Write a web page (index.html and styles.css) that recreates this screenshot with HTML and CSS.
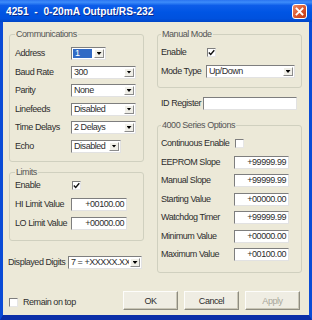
FILE: index.html
```html
<!DOCTYPE html>
<html lang="en">
<head>
    <meta charset="UTF-8">
    <meta name="viewport" content="width=device-width, initial-scale=1.0">
    <title>4251 - 0-20mA Output/RS-232</title>
    <link rel="stylesheet" href="styles.css">
</head>
<body>
    <div class="window">
        <div class="titlebar">
            <span class="title">4251&nbsp; -&nbsp; 0-20mA Output/RS-232</span>
            <span class="close">
                <svg width="13" height="13" viewBox="0 0 13 13"><path d="M3.5 3.5 L9.5 9.5 M9.5 3.5 L3.5 9.5" stroke="#fff" stroke-width="1.8" stroke-linecap="square"/></svg>
            </span>
        </div>

        <div class="body">
            <div class="columns">
                <!-- left column -->
                <div class="col">
                    <fieldset class="group comm">
                        <legend>Communications</legend>
                        <div class="rows">
                            <div class="row"><span class="label">Address</span><div class="combo w-addr"><span class="val sel">1</span><span class="drop"></span></div></div>
                            <div class="row"><span class="label">Baud Rate</span><div class="combo w-comm"><span class="val">300</span><span class="drop"></span></div></div>
                            <div class="row"><span class="label">Parity</span><div class="combo w-comm"><span class="val">None</span><span class="drop"></span></div></div>
                            <div class="row"><span class="label">Linefeeds</span><div class="combo w-comm"><span class="val">Disabled</span><span class="drop"></span></div></div>
                            <div class="row"><span class="label">Time Delays</span><div class="combo w-comm"><span class="val">2 Delays</span><span class="drop"></span></div></div>
                            <div class="row"><span class="label">Echo</span><div class="combo w-echo"><span class="val">Disabled</span><span class="drop"></span></div></div>
                        </div>
                    </fieldset>

                    <fieldset class="group limits">
                        <legend>Limits</legend>
                        <div class="rows">
                            <div class="row"><span class="label">Enable</span><span class="check on"><svg width="7" height="7" viewBox="0 0 7 7"><path d="M0.8 3.4 L2.7 5.4 L6.3 1.2" fill="none" stroke="#111" stroke-width="1.4"/></svg></span></div>
                            <div class="row"><span class="label">HI Limit Value</span><span class="field w-limit">+00100.00</span></div>
                            <div class="row"><span class="label">LO Limit Value</span><span class="field w-limit">+00000.00</span></div>
                        </div>
                    </fieldset>

                    <div class="row digits"><span class="label">Displayed Digits</span><div class="combo w-digits"><span class="val">7 = +XXXXX.XX</span><span class="drop"></span></div></div>
                </div>

                <!-- right column -->
                <div class="col">
                    <fieldset class="group manual">
                        <legend>Manual Mode</legend>
                        <div class="rows">
                            <div class="row"><span class="label">Enable</span><span class="check on"><svg width="7" height="7" viewBox="0 0 7 7"><path d="M0.8 3.4 L2.7 5.4 L6.3 1.2" fill="none" stroke="#111" stroke-width="1.4"/></svg></span></div>
                            <div class="row"><span class="label">Mode Type</span><div class="combo w-mode"><span class="val">Up/Down</span><span class="drop"></span></div></div>
                        </div>
                    </fieldset>

                    <div class="row idreg"><span class="label">ID Register</span><span class="field w-id"></span></div>

                    <fieldset class="group series">
                        <legend>4000 Series Options</legend>
                        <div class="rows">
                            <div class="row"><span class="label">Continuous Enable</span><span class="check"></span></div>
                            <div class="row"><span class="label">EEPROM Slope</span><span class="field w-opt">+99999.99</span></div>
                            <div class="row"><span class="label">Manual Slope</span><span class="field w-opt">+99999.99</span></div>
                            <div class="row"><span class="label">Starting Value</span><span class="field w-opt">+00000.00</span></div>
                            <div class="row"><span class="label">Watchdog Timer</span><span class="field w-opt">+99999.99</span></div>
                            <div class="row"><span class="label">Minimum Value</span><span class="field w-opt">+00000.00</span></div>
                            <div class="row"><span class="label">Maximum Value</span><span class="field w-opt">+00100.00</span></div>
                        </div>
                    </fieldset>
                </div>
            </div>

            <div class="footer">
                <div class="row ontop"><span class="check"></span><span class="label">Remain on top</span></div>
                <div class="buttons">
                    <button class="btn">OK</button>
                    <button class="btn">Cancel</button>
                    <button class="btn" disabled>Apply</button>
                </div>
            </div>
        </div>
    </div>
</body>
</html>
```

FILE: styles.css
```css
* {
    box-sizing: border-box;
}

body {
    margin: 0;
    font-family: "Liberation Sans", Arial, sans-serif;
    font-size: 9px;
    letter-spacing: -0.45px;
    color: #2e2e2e;
}

.window {
    width: 312px;
    height: 320px;
    display: flex;
    flex-direction: column;
    background: #ece9d8;
}

/* XP style caption */
.titlebar {
    height: 22px;
    flex: none;
    display: flex;
    align-items: center;
    justify-content: space-between;
    padding: 0 5px 0 6px;
    background: linear-gradient(to bottom, #2a74f0 0%, #3d8cfa 10%, #0d5de9 25%, #0055e4 55%, #0051de 85%, #0045c6 100%);
}

.title {
    font-weight: bold;
    font-size: 10.2px;
    letter-spacing: 0;
    color: #fff;
    text-shadow: 1px 1px 0 #0a2a8c;
    white-space: nowrap;
}

.close {
    width: 15px;
    height: 15px;
    display: flex;
    align-items: center;
    justify-content: center;
    border: 1px solid #fff;
    border-radius: 3px;
    background: linear-gradient(to bottom right, #ef8a64, #d5512a 60%, #c03a14);
}

.body {
    flex: 1;
    border-style: solid;
    border-width: 0 3px 5px;
    border-color: #0a4bd6 #0a4bd6 #0b2fa8;
    padding: 6px 7px 0 6px;
}

.columns {
    display: grid;
    grid-template-columns: 135px 145px;
    column-gap: 13px;
    align-items: start;
}

/* group boxes */
.group {
    margin: 0;
    min-width: 0;
    border: 1px solid #d0d0bf;
    border-radius: 3px;
}

.group legend {
    padding: 0 1px;
    height: 12px;
    line-height: 12px;
    color: #555;
}

.rows {
    display: flex;
    flex-direction: column;
}

.comm {
    padding: 7px 5px 8px;
}

.comm .rows {
    gap: 5.5px;
}

.limits {
    margin-top: 4.5px;
    padding: 1px 5px 10px;
}

.limits .rows {
    gap: 6px;
}

.manual {
    padding: 6px 3px 9px;
}

.manual .rows {
    gap: 6px;
}

.series {
    margin-top: 9px;
    padding: 6px 3px 10.5px;
}

.series .rows {
    gap: 5.5px;
}

/* rows and labels */
.row {
    display: flex;
    align-items: center;
    height: 13px;
}

.label {
    flex: none;
    white-space: nowrap;
    line-height: 13px;
}

.comm .label,
.limits .label {
    width: 56px;
}

.manual .label {
    width: 45px;
}

.series .label {
    width: 73px;
}

.digits {
    margin: 15px 0 0 -1px;
}

.digits .label {
    width: 60px;
}

.idreg {
    margin-top: 9px;
    padding-left: 4px;
}

.idreg .label {
    width: 42px;
}

/* combo boxes */
.combo {
    display: flex;
    align-items: stretch;
    height: 13px;
    background: #fff;
    border: 1px solid;
    border-color: #7e7e7e #e2e2e2 #e2e2e2 #7e7e7e;
}

.combo .val {
    flex: 1;
    min-width: 0;
    overflow: hidden;
    white-space: nowrap;
    padding-left: 2px;
    line-height: 11px;
}

.combo .val.sel {
    margin: 1px;
    background: #316ac5;
    color: #fff;
    line-height: 9px;
}

.drop {
    flex: none;
    width: 10px;
    margin: 1px;
    display: flex;
    align-items: center;
    justify-content: center;
    background: #f0efe8;
    border: 1px solid;
    border-color: #fff #8c8c8c #8c8c8c #fff;
}

.drop::before {
    content: "";
    width: 5px;
    height: 3px;
    background: #000;
    clip-path: polygon(0 0, 100% 0, 50% 100%);
}

.w-addr { width: 35px; }
.w-comm { width: 65px; }
.w-echo { width: 50px; }
.w-digits { width: 74px; }
.w-mode { width: 89px; }

/* edit fields */
.field {
    height: 13px;
    background: #fff;
    border: 1px solid;
    border-color: #7e7e7e #e2e2e2 #e2e2e2 #7e7e7e;
    text-align: right;
    padding-right: 2px;
    line-height: 11px;
    white-space: nowrap;
}

.w-limit { width: 56px; }
.w-opt { width: 55px; }
.w-id { width: 94px; }

/* check boxes */
.check {
    flex: none;
    width: 9px;
    height: 9px;
    margin-left: 1px;
    display: flex;
    align-items: center;
    justify-content: center;
    background: #fff;
    border: 1px solid;
    border-color: #7e7e7e #e6e6e6 #e6e6e6 #7e7e7e;
}

/* footer */
.footer {
    display: flex;
    align-items: center;
    justify-content: space-between;
    margin-top: 18.5px;
}

.ontop {
    margin-top: 3px;
}

.ontop .check {
    margin: 0 5px 0 0;
}

.buttons {
    display: flex;
    gap: 6px;
    padding-right: 2px;
}

.btn {
    width: 55px;
    height: 19px;
    padding: 0;
    font: inherit;
    letter-spacing: inherit;
    color: #2e2e2e;
    background: #efede3;
    border: 1px solid;
    border-color: #fdfdfb #8e8c80 #8e8c80 #fdfdfb;
    box-shadow: inset -1px -1px 0 #c9c6b6;
}

.btn:disabled {
    color: #a9a79b;
}
```
